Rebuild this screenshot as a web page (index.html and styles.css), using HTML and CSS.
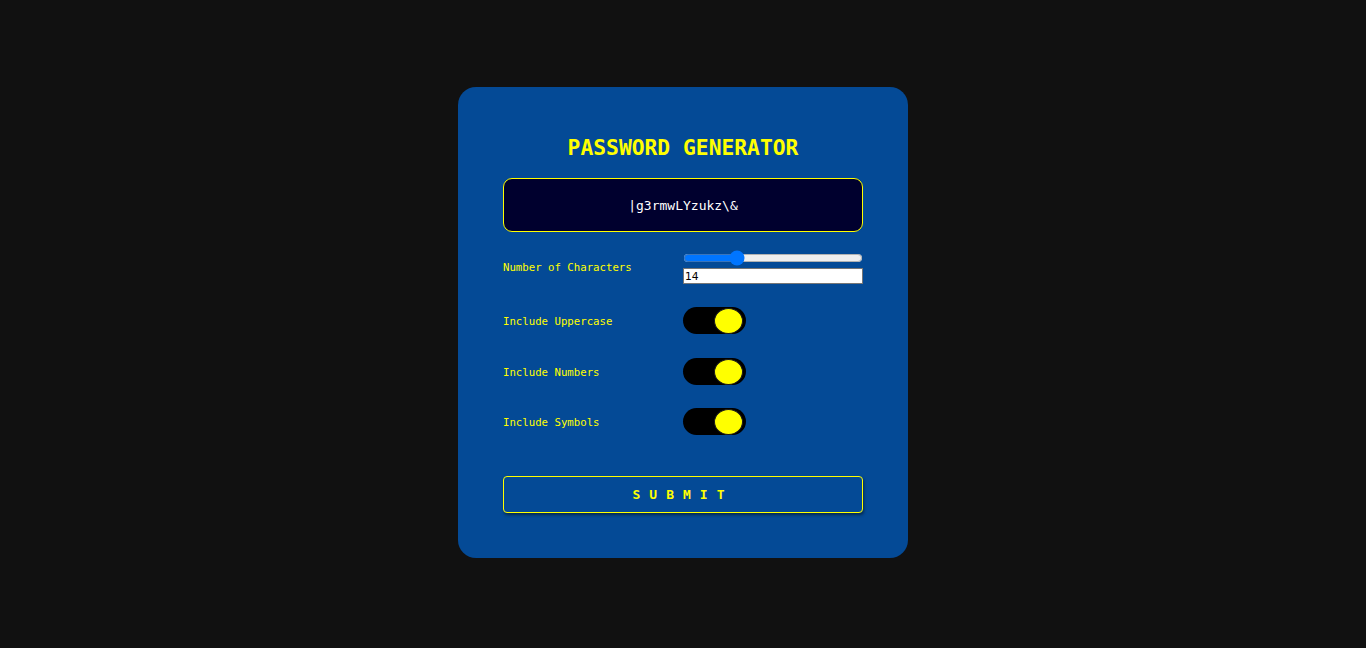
FILE: index.html
```html
<!DOCTYPE html>
<html lang="en">
<head>
<meta charset="utf-8">
<title>Password Generator</title>
<link rel="stylesheet" href="styles.css">
</head>
<body>
<main class="card">
  <h1 class="title">PASSWORD GENERATOR</h1>
  <div class="output">|g3rmwLYzukz\&amp;</div>
  <div class="options">
    <div class="row">
      <label class="label" for="len">Number of Characters</label>
      <div class="length">
        <input class="range" type="range" id="len" min="4" max="40" value="14">
        <input class="number" type="number" value="14">
      </div>
    </div>
    <div class="row">
      <span class="label">Include Uppercase</span>
      <span class="toggle"><span class="knob"></span></span>
    </div>
    <div class="row row-shift">
      <span class="label">Include Numbers</span>
      <span class="toggle"><span class="knob"></span></span>
    </div>
    <div class="row">
      <span class="label">Include Symbols</span>
      <span class="toggle"><span class="knob"></span></span>
    </div>
  </div>
  <button class="submit" type="button">SUBMIT</button>
</main>
</body>
</html>
```
FILE: styles.css
```css
* { box-sizing: border-box; }
html, body { margin: 0; height: 100%; }
body {
  background: #111111;
  font-family: "DejaVu Sans Mono", monospace;
  display: flex;
  align-items: center;
  justify-content: center;
}
.card {
  width: 450px;
  height: 471px;
  background: #044a96;
  border-radius: 18px;
  padding: 46px 45px 45px;
  display: flex;
  flex-direction: column;
  margin-top: -3px;
}
.title {
  margin: 0;
  color: #ffff00;
  font-size: 21.3px;
  line-height: 30px;
  font-weight: bold;
  text-align: center;
}
.output {
  margin-top: 15px;
  height: 54px;
  flex: none;
  border: 1px solid #ffff00;
  border-radius: 9px;
  background: #00002e;
  color: #ffffff;
  font-size: 13px;
  display: flex;
  align-items: center;
  justify-content: center;
}
.options {
  margin-top: 17px;
  display: flex;
  flex-direction: column;
  gap: 23px;
}
.row {
  display: grid;
  grid-template-columns: 1fr 1fr;
  align-items: center;
}
.row-shift {
  margin-top: 1px;
}
.label {
  color: #ffff00;
  font-size: 10.7px;
  padding-top: 2px;
}
.length {
  display: flex;
  flex-direction: column;
}
.range {
  width: 180px;
  margin: 1px 0 2px;
}
.number {
  width: 180px;
  height: 16px;
  margin: 0;
  padding: 0 1px;
  border: 1px solid #767676;
  background: #ffffff;
  color: #000000;
  font-family: "DejaVu Sans", sans-serif;
  font-size: 10.7px;
}
.toggle {
  width: 63px;
  height: 27px;
  background: #000000;
  border-radius: 14px;
  display: flex;
  align-items: center;
  justify-content: flex-end;
  padding-right: 3px;
}
.knob {
  width: 29px;
  height: 26px;
  border-radius: 50%;
  background: #ffff00;
  border: 1px solid #1a1a1a;
}
.submit {
  margin-top: auto;
  height: 37px;
  flex: none;
  background: transparent;
  border: 1px solid #ffff00;
  border-radius: 4px;
  box-shadow: 1px 2px 3px rgba(0, 0, 0, 0.45);
  color: #ffff00;
  font-family: "DejaVu Sans Mono", monospace;
  font-size: 13px;
  font-weight: bold;
  letter-spacing: 9px;
  padding: 0;
}
```
